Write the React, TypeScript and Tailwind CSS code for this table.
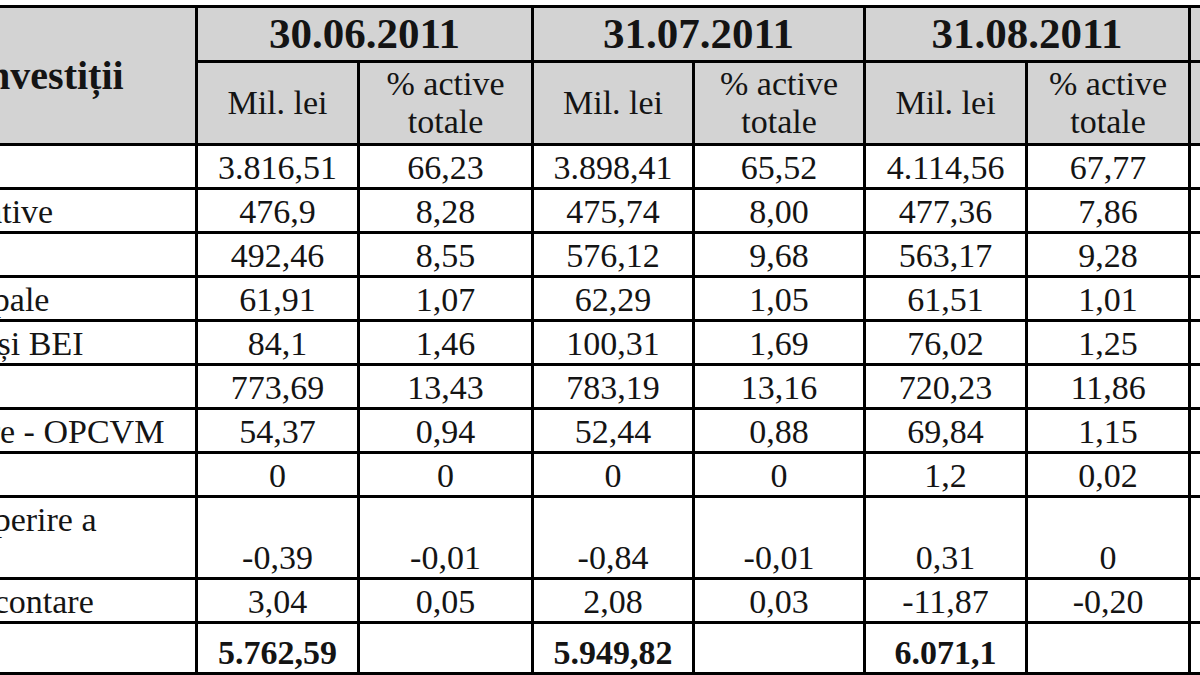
import React from 'react';

interface Row {
  label: string;
  values: string[];
  tall?: boolean;
  bold?: boolean;
}

const dates = ['30.06.2011', '31.07.2011', '31.08.2011'];

const rows: Row[] = [
  { label: 'Titluri de stat', values: ['3.816,51', '66,23', '3.898,41', '65,52', '4.114,56', '67,77'] },
  { label: 'Obligațiuni corporative', values: ['476,9', '8,28', '475,74', '8,00', '477,36', '7,86'] },
  { label: 'Acțiuni', values: ['492,46', '8,55', '576,12', '9,68', '563,17', '9,28'] },
  { label: 'Obligațiuni municipale', values: ['61,91', '1,07', '62,29', '1,05', '61,51', '1,01'] },
  { label: 'Obligațiuni BERD și BEI', values: ['84,1', '1,46', '100,31', '1,69', '76,02', '1,25'] },
  { label: 'Depozite bancare', values: ['773,69', '13,43', '783,19', '13,16', '720,23', '11,86'] },
  { label: 'Titluri de participare - OPCVM', values: ['54,37', '0,94', '52,44', '0,88', '69,84', '1,15'] },
  { label: 'Produse structurate', values: ['0', '0', '0', '0', '1,2', '0,02'] },
  { label: 'Instrumente de acoperire a riscului', values: ['-0,39', '-0,01', '-0,84', '-0,01', '0,31', '0'], tall: true },
  { label: 'Sume în curs de decontare', values: ['3,04', '0,05', '2,08', '0,03', '-11,87', '-0,20'] },
  { label: 'Total', values: ['5.762,59', '', '5.949,82', '', '6.071,1', ''], bold: true },
];

const cell = 'border-[3px] border-black';
const head = 'border-[3px] border-black bg-[#d3d3d3]';

export default function App() {
  return (
    <div className="w-[1200px] h-[675px] overflow-hidden bg-white pt-[5px] font-serif">
      <table className="-ml-[274px] w-[1629px] table-fixed border-collapse font-[Liberation_Serif,Times_New_Roman,serif] text-[34px] leading-[38px] text-[#141414]">
        <colgroup>
          <col className="w-[469px]" />
          <col className="w-[162px]" />
          <col className="w-[174px]" />
          <col className="w-[161px]" />
          <col className="w-[171px]" />
          <col className="w-[162px]" />
          <col className="w-[163px]" />
          <col className="w-[167px]" />
        </colgroup>
        <thead>
          <tr className="h-[55px]">
            <th rowSpan={2} className={`${head} text-[40px] font-bold text-center align-middle`}>
              Structura investiții
            </th>
            {dates.map((d) => (
              <th key={d} colSpan={2} className={`${head} text-[43px] font-bold text-center align-middle`}>
                {d}
              </th>
            ))}
            <th className={head}></th>
          </tr>
          <tr className="h-[83px]">
            {dates.map((d) => (
              <React.Fragment key={d}>
                <th className={`${head} font-normal text-center align-middle`}>Mil. lei</th>
                <th className={`${head} font-normal text-center align-middle`}>
                  % active
                  <br />
                  totale
                </th>
              </React.Fragment>
            ))}
            <th className={head}></th>
          </tr>
        </thead>
        <tbody>
          {rows.map((r, i) => (
            <tr key={i} className={r.tall ? 'h-[82px]' : i === rows.length - 1 ? 'h-[51px]' : 'h-[44px]'}>
              <td className={`${cell} px-[6px] text-left align-bottom ${r.bold ? 'font-bold' : ''}`}>{r.label}</td>
              {r.values.map((v, j) => (
                <td key={j} className={`${cell} text-center align-bottom ${r.bold ? 'font-bold' : ''}`}>
                  {v}
                </td>
              ))}
              <td className={cell}></td>
            </tr>
          ))}
        </tbody>
      </table>
    </div>
  );
}
